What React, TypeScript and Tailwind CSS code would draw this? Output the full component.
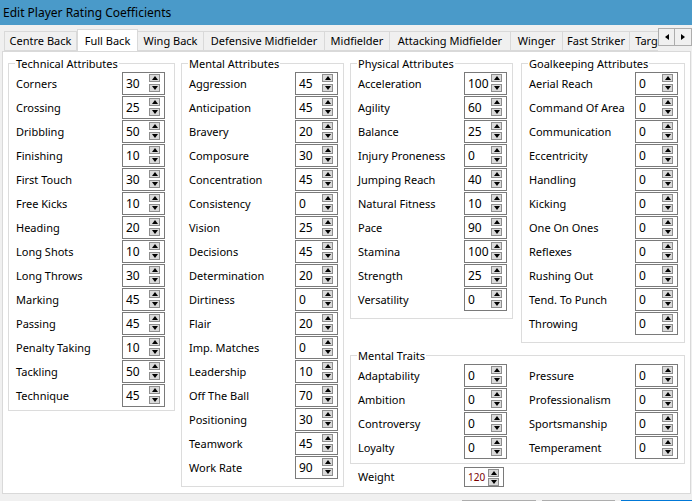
import React from 'react';

type Attr = [string, number];

const tabs = [
  { name: 'Centre Back', w: 'w-[73px]' },
  { name: 'Full Back', w: 'w-[61px]', active: true },
  { name: 'Wing Back', w: 'w-[66px]' },
  { name: 'Defensive Midfielder', w: 'w-[121px]' },
  { name: 'Midfielder', w: 'w-[65px]' },
  { name: 'Attacking Midfielder', w: 'w-[121px]' },
  { name: 'Winger', w: 'w-[52px]' },
  { name: 'Fast Striker', w: 'w-[67px]' },
  { name: 'Target Man', w: 'w-[70px]' },
];

const technical: Attr[] = [
  ['Corners', 30], ['Crossing', 25], ['Dribbling', 50], ['Finishing', 10], ['First Touch', 30],
  ['Free Kicks', 10], ['Heading', 20], ['Long Shots', 10], ['Long Throws', 30], ['Marking', 45],
  ['Passing', 45], ['Penalty Taking', 10], ['Tackling', 50], ['Technique', 45],
];

const mental: Attr[] = [
  ['Aggression', 45], ['Anticipation', 45], ['Bravery', 20], ['Composure', 30], ['Concentration', 45],
  ['Consistency', 0], ['Vision', 25], ['Decisions', 45], ['Determination', 20], ['Dirtiness', 0],
  ['Flair', 20], ['Imp. Matches', 0], ['Leadership', 10], ['Off The Ball', 70], ['Positioning', 30],
  ['Teamwork', 45], ['Work Rate', 90],
];

const physical: Attr[] = [
  ['Acceleration', 100], ['Agility', 60], ['Balance', 25], ['Injury Proneness', 0], ['Jumping Reach', 40],
  ['Natural Fitness', 10], ['Pace', 90], ['Stamina', 100], ['Strength', 25], ['Versatility', 0],
];

const goalkeeping: Attr[] = [
  ['Aerial Reach', 0], ['Command Of Area', 0], ['Communication', 0], ['Eccentricity', 0], ['Handling', 0],
  ['Kicking', 0], ['One On Ones', 0], ['Reflexes', 0], ['Rushing Out', 0], ['Tend. To Punch', 0], ['Throwing', 0],
];

const traitsLeft: Attr[] = [['Adaptability', 0], ['Ambition', 0], ['Controversy', 0], ['Loyalty', 0]];
const traitsRight: Attr[] = [['Pressure', 0], ['Professionalism', 0], ['Sportsmanship', 0], ['Temperament', 0]];

function StepButton({ up }: { up?: boolean }) {
  return (
    <div className="flex h-[8px] w-[11px] items-center justify-center border border-[#8e8e8e] bg-[#dadada]">
      <svg width="6" height="4" viewBox="0 0 6 4">
        {up ? <polygon points="0,4 6,4 3,0" fill="#000" /> : <polygon points="0,0 6,0 3,4" fill="#000" />}
      </svg>
    </div>
  );
}

function Spin({ value }: { value: number }) {
  return (
    <div className="flex h-[23px] w-[43px] border border-[#7a7a7a] bg-white">
      <span className="pl-[3px] pt-[3px] text-[12px] leading-[15px]">{value}</span>
      <div className="ml-auto mr-[4px] mt-[1px] flex flex-col gap-[2px]">
        <StepButton up />
        <StepButton />
      </div>
    </div>
  );
}

function Row({ label, value }: { label: string; value: number }) {
  return (
    <div className="grid h-[24px] grid-cols-[106px_43px] items-start">
      <span className="leading-[23px]">{label}</span>
      <Spin value={value} />
    </div>
  );
}

function Group({ title, className, children }: { title: string; className: string; children: React.ReactNode }) {
  return (
    <fieldset className={`border border-[#dcdcdc] pl-[7px] ${className}`}>
      <legend className="-ml-[1px] px-[1px] leading-[15px]">{title}</legend>
      <div className="pt-[1px]">{children}</div>
    </fieldset>
  );
}

function TabStrip() {
  return (
    <div className="flex h-[22px] pl-[4px]">
      <div className="flex w-[654px] overflow-hidden">
        {tabs.map((t) =>
          t.active ? (
            <div
              key={t.name}
              className={`z-10 -mb-px flex h-[23px] shrink-0 items-center justify-center border border-b-0 border-[#d9d9d9] bg-white ${t.w}`}
            >
              {t.name}
            </div>
          ) : (
            <div
              key={t.name}
              className={`mt-[2px] flex h-[20px] shrink-0 items-center justify-center border border-l-0 border-[#d9d9d9] bg-[#f0f0f0] first:border-l ${t.w}`}
            >
              {t.name}
            </div>
          ),
        )}
      </div>
      <div className="-mt-px flex">
        <div className="flex h-[18px] w-[17px] items-center justify-center border border-[#adadad] bg-[#f0f0f0]">
          <svg width="4" height="6" viewBox="0 0 4 6"><polygon points="4,0 4,6 0,3" fill="#000" /></svg>
        </div>
        <div className="flex h-[18px] w-[17px] items-center justify-center border border-l-0 border-[#adadad] bg-[#f0f0f0]">
          <svg width="4" height="6" viewBox="0 0 4 6"><polygon points="0,0 0,6 4,3" fill="#000" /></svg>
        </div>
      </div>
    </div>
  );
}

export default function App() {
  return (
    <div className="flex h-[501px] w-[692px] flex-col overflow-hidden bg-[#f0f0f0] font-['Noto_Sans',sans-serif] text-[11px] text-black">
      <div className="flex h-[25px] shrink-0 items-center bg-[#4a9ac9] pl-[3px] text-[12px]">
        Edit Player Rating Coefficients
      </div>

      <div className="pt-[4px]">
        <TabStrip />
      </div>

      <div className="mx-[2px] flex h-[443px] w-[689px] shrink-0 gap-[6px] border border-[#d9d9d9] bg-white pl-[5px] pt-[4px]">
        <Group title="Technical Attributes" className="h-[355px] w-[167px]">
          {technical.map(([l, v]) => <Row key={l} label={l} value={v} />)}
        </Group>

        <Group title="Mental Attributes" className="h-[431px] w-[163px]">
          {mental.map(([l, v]) => <Row key={l} label={l} value={v} />)}
        </Group>

        <div className="flex w-[335px] flex-col">
          <div className="flex items-start gap-[8px]">
            <Group title="Physical Attributes" className="h-[263px] w-[163px]">
              {physical.map(([l, v]) => <Row key={l} label={l} value={v} />)}
            </Group>
            <Group title="Goalkeeping Attributes" className="h-[287px] w-[164px]">
              {goalkeeping.map(([l, v]) => <Row key={l} label={l} value={v} />)}
            </Group>
          </div>

          <Group title="Mental Traits" className="mt-[5px] h-[116px] w-[335px]">
            <div className="flex gap-[22px]">
              <div>{traitsLeft.map(([l, v]) => <Row key={l} label={l} value={v} />)}</div>
              <div>{traitsRight.map(([l, v]) => <Row key={l} label={l} value={v} />)}</div>
            </div>
          </Group>

          <div className="mt-[3px] grid grid-cols-[106px_40px] items-center pl-[8px]">
            <span className="leading-[20px]">Weight</span>
            <div className="flex h-[20px] w-[40px] border border-[#7a7a7a] bg-white">
              <span className="pl-[3px] pt-[2px] text-[10px] leading-[14px] text-[#7a0000]">120</span>
              <div className="ml-auto mr-[4px] mt-[1px] flex flex-col gap-[1px]">
                <StepButton up />
                <StepButton />
              </div>
            </div>
          </div>
        </div>
      </div>

      <div className="mt-[6px] flex gap-[6px] pl-[462px]">
        <div className="h-[23px] w-[74px] shrink-0 border border-[#adadad] bg-[#e1e1e1]" />
        <div className="h-[23px] w-[73px] shrink-0 border border-[#adadad] bg-[#e1e1e1]" />
        <div className="h-[23px] w-[74px] shrink-0 border border-[#0078d7] bg-[#e1e1e1]" />
      </div>
    </div>
  );
}
